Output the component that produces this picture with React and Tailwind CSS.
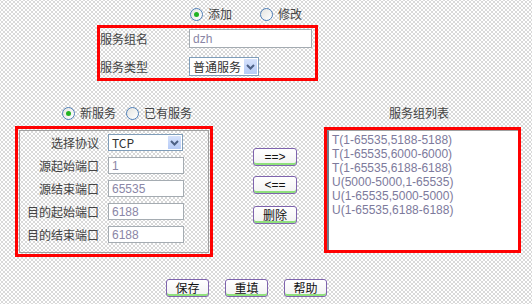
const SERVICES = [
  'T(1-65535,5188-5188)',
  'T(1-65535,6000-6000)',
  'T(1-65535,6188-6188)',
  'U(5000-5000,1-65535)',
  'U(1-65535,5000-5000)',
  'U(1-65535,6188-6188)',
];

const PORT_ROWS = [
  { label: '源起始端口', value: '1' },
  { label: '源结束端口', value: '65535' },
  { label: '目的起始端口', value: '6188' },
  { label: '目的结束端口', value: '6188' },
];

function Radio({ checked, label, className = '' }) {
  return (
    <label className={`flex items-center gap-[5px] ${className}`}>
      <span className="w-[13px] h-[13px] rounded-full border border-[#4f7fb8] bg-gradient-to-br from-[#e4e4e0] to-white flex items-center justify-center">
        {checked && <span className="w-[5px] h-[5px] rounded-full bg-[#22b322]" />}
      </span>
      <span>{label}</span>
    </label>
  );
}

function Chevron() {
  return (
    <svg width="9" height="6" viewBox="0 0 9 6">
      <path d="M1 1 L4.5 4.5 L8 1" fill="none" stroke="#4d6185" strokeWidth="2" />
    </svg>
  );
}

function Select({ value, className = '' }) {
  return (
    <div className={`flex items-center border border-[#7f9db9] bg-white ${className}`}>
      <span className="flex-1 pl-[3px] text-[#333] leading-none">{value}</span>
      <span className="w-[15px] h-full flex items-center justify-center bg-gradient-to-b from-[#d6e2fc] to-[#b6cbf6] border border-white">
        <Chevron />
      </span>
    </div>
  );
}

function TextBox({ value, className = '' }) {
  return (
    <div className={`border border-[#a5acb2] bg-white pl-[3px] flex items-center text-[#8a86a6] font-['Liberation_Sans',sans-serif] ${className}`}>
      {value}
    </div>
  );
}

function Btn({ children, className = '' }) {
  return (
    <button
      type="button"
      className={`h-[18px] border border-[#7e63ad] rounded-[3px] bg-gradient-to-b from-white to-[#f2f2f2] shadow-[inset_0_-2px_0_#8fe07c] text-[#111] text-[12px] leading-none flex items-center justify-center ${className}`}
    >
      {children}
    </button>
  );
}

export default function App() {
  return (
    <div className="w-[532px] h-[304px] overflow-hidden bg-white bg-[radial-gradient(#c4c4c4_0.6px,transparent_0.9px),radial-gradient(#c4c4c4_0.6px,transparent_0.9px)] bg-[length:4px_4px] bg-[position:0_0,2px_2px] text-[12px] text-[#444] font-['Noto_Sans_CJK_SC','Liberation_Sans',sans-serif] flex flex-col">
      {/* add / modify */}
      <div className="flex items-center h-[14px] mt-[7px] ml-[190px]">
        <Radio checked label="添加" />
        <Radio label="修改" className="ml-[28px]" />
      </div>

      {/* group name + type */}
      <div className="mt-[4px] ml-[97px] w-[221px] h-[56px] border-[3px] border-[#ff0000] flex flex-col gap-[9px]">
        <div className="flex items-center h-[19px] mt-[1px]">
          <span className="w-[89px]">服务组名</span>
          <TextBox value="dzh" className="w-[123px] h-[19px]" />
        </div>
        <div className="flex items-center h-[19px]">
          <span className="w-[89px]">服务类型</span>
          <Select value="普通服务" className="w-[70px] h-[19px]" />
        </div>
      </div>

      {/* new / existing */}
      <div className="flex items-center h-[14px] mt-[25px]">
        <Radio checked label="新服务" className="ml-[62px]" />
        <Radio label="已有服务" className="ml-[10px]" />
        <span className="ml-[197px]">服务组列表</span>
      </div>

      <div className="flex items-start mt-[6px]">
        {/* port box */}
        <div className="ml-[15px] w-[198px] h-[131px] border-[3px] border-[#ff0000]">
          <div className="m-[1px] h-[123px] border border-[#a0a0a0] flex flex-col gap-[6px] pt-[3px]">
            <div className="flex items-center h-[17px]">
              <span className="w-[79px] text-right">选择协议</span>
              <Select value="TCP" className="ml-[9px] w-[75px] h-[17px]" />
            </div>
            {PORT_ROWS.map((row) => (
              <div key={row.label} className="flex items-center h-[17px]">
                <span className="w-[79px] text-right whitespace-nowrap">{row.label}</span>
                <TextBox value={row.value} className="ml-[9px] w-[76px] h-[17px]" />
              </div>
            ))}
          </div>
        </div>

        {/* move buttons */}
        <div className="ml-[40px] mt-[22px] flex flex-col gap-[10px]">
          <Btn className="w-[44px] font-['Liberation_Sans',sans-serif]">==&gt;</Btn>
          <Btn className="w-[44px] font-['Liberation_Sans',sans-serif]">&lt;==</Btn>
          <Btn className="w-[44px] mt-[2px]">删除</Btn>
        </div>

        {/* service list */}
        <div className="ml-[27px] mt-[1px] w-[197px] h-[126px] border-[3px] border-[#ff0000]">
          <div className="h-full bg-white border-l-2 border-[#6f7d8c] border-t border-t-[#a0a0a0] pl-[3px] pt-[2px] font-['Liberation_Sans',sans-serif] text-[#7d7a9c] leading-[14px]">
            {SERVICES.map((s) => (
              <div key={s}>{s}</div>
            ))}
          </div>
        </div>
      </div>

      {/* bottom actions */}
      <div className="flex mt-[22px] ml-[166px] gap-[16px]">
        <Btn className="w-[43px]">保存</Btn>
        <Btn className="w-[43px]">重填</Btn>
        <Btn className="w-[43px]">帮助</Btn>
      </div>
    </div>
  );
}
